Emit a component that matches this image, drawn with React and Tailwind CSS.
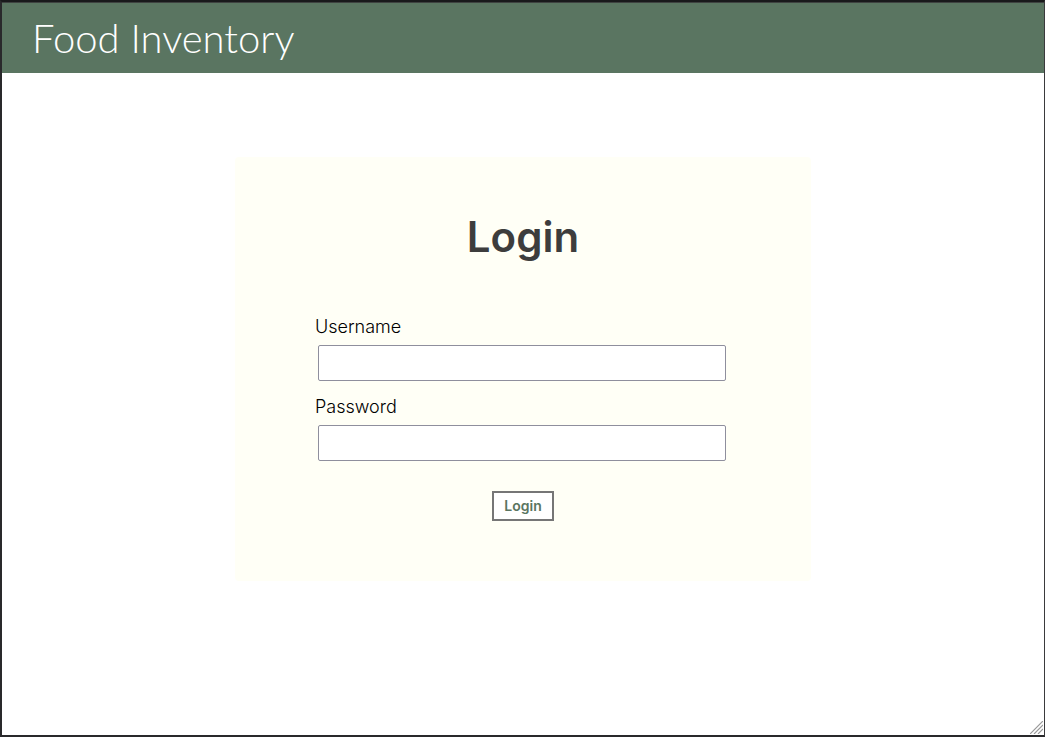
function Field({ id, label, type }) {
  return (
    <div className="flex flex-col">
      <label htmlFor={id} className="font-['Inter',sans-serif] text-[18px] leading-7 font-light text-black">
        {label}
      </label>
      <input
        id={id}
        name={id}
        type={type}
        className="mt-1 mr-[5px] ml-[3px] h-9 rounded-[2px] border border-[#8f8f9d] bg-white px-2 text-base outline-none"
      />
    </div>
  );
}

function ResizeGrip() {
  return (
    <svg
      aria-hidden="true"
      className="absolute right-px bottom-px h-[13px] w-[13px]"
      viewBox="0 0 13 13"
      fill="none"
      stroke="#999999"
      strokeWidth="1.2"
    >
      <path d="M0 13 13 0M4 13 13 4M8 13 13 8" />
    </svg>
  );
}

export default function App() {
  return (
    <div className="flex min-h-screen flex-col border-t-2 border-r border-b-2 border-l-2 border-t-[#19191b] border-r-[#3a3a3c] border-b-[#29292b] border-l-[#29292b] bg-white font-['Lato',sans-serif]">
      <header className="flex h-[71px] items-center border-t border-[#3e4240] bg-[#5a7561] px-[30px]">
        <h1 className="text-[40px] leading-[50px] font-light text-white">Food Inventory</h1>
      </header>
      <main className="relative flex grow flex-col items-center pt-[84px]">
        <section className="w-full max-w-[576px] rounded bg-[#fffff6] px-20 pt-[52px] pb-[60px]">
          <h2 className="text-center font-['Inter',sans-serif] text-[42px] leading-[56px] font-semibold text-[#3d3d3d]">
            Login
          </h2>
          <form
            className="mt-12 flex flex-col gap-3"
            onSubmit={(event) => event.preventDefault()}
          >
            <Field id="username" label="Username" type="text" />
            <Field id="password" label="Password" type="password" />
            <button
              type="submit"
              className="mt-[18px] h-[30px] self-center border-2 border-[#767676] bg-white px-[10px] font-['Inter',sans-serif] text-[14px] leading-5 font-semibold text-[#5a7561]"
            >
              Login
            </button>
          </form>
        </section>
        <ResizeGrip />
      </main>
    </div>
  );
}
